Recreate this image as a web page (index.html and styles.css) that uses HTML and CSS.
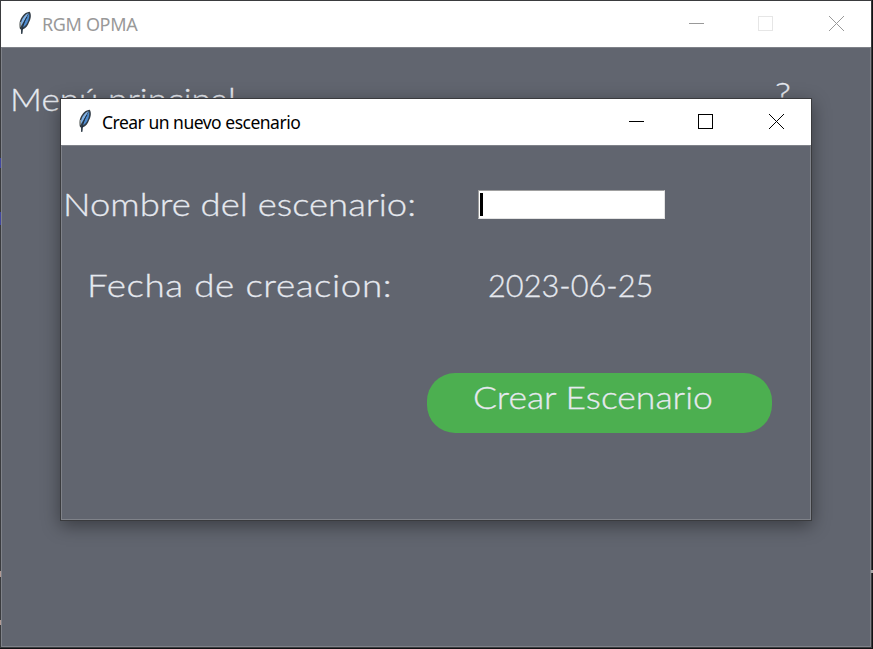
FILE: index.html
```html
<!DOCTYPE html>
<html lang="es">
<head>
<meta charset="utf-8">
<title>RGM OPMA</title>
<link rel="stylesheet" href="styles.css">
</head>
<body>
<svg width="0" height="0" class="defs">
  <symbol id="feather" viewBox="0 0 16 24">
    <path d="M12.800.7C9 .8 5.300 4 3.300 9c-1 2.700-1.200 6-.3 9l1 .6L4.300 23l1-.1.3-4.300c3.500-1.500 5.600-4.400 6.500-7.600C13.800 8 14.700 4 12.800.7Z" fill="#333d46"/>
    <path d="M11.600 2C8 3.500 4.900 7.500 4 12l-.2 3.500L7 10Z" fill="#83b4e8"/>
    <path d="M12 2.200 8.500 9l-3.200 7.800c3-1.500 4.800-3.800 5.800-6.800.8-2.500 1.600-5 .9-7.800Z" fill="#4f8ccf"/>
    <path d="M10 6C8 9 5.600 14 4.700 22.500" fill="none" stroke="#142638" stroke-width=".8"/>
    <path d="m3.300 11-.4 5" stroke="#b9b9ae" stroke-width="1"/>
  </symbol>
</svg>
<div class="window main">
  <div class="titlebar">
    <svg class="feather"><use href="#feather"/></svg>
    <span class="title">RGM OPMA</span>
    <svg class="controls" width="160" height="16" shape-rendering="crispEdges">
      <path class="min" d="M0 7.500h15"/><rect class="max" x="69.500" y=".5" width="14" height="14"/><path class="close" shape-rendering="auto" d="m140 0 15 15m0-15-15 15"/>
    </svg>
  </div>
  <div class="content">
    <div class="heading"><span class="label menu">Menú principal</span><span class="label help">?</span></div>
  </div>
  <i class="edge e1"></i><i class="edge e2"></i><i class="edge e3"></i><i class="edge e4"></i><i class="edge e5"></i>
</div>
<div class="window dialog">
  <div class="titlebar">
    <svg class="feather"><use href="#feather"/></svg>
    <span class="title">Crear un nuevo escenario</span>
    <svg class="controls" width="160" height="16" shape-rendering="crispEdges">
      <path class="min" d="M0 7.500h15"/><rect class="max" x="69.500" y=".5" width="14" height="14"/><path class="close" shape-rendering="auto" d="m140 0 15 15m0-15-15 15"/>
    </svg>
  </div>
  <div class="content form">
    <div class="row name"><div class="cell"><span class="label">Nombre del escenario:</span></div><div class="entry"><i class="caret"></i></div></div>
    <div class="row date"><div class="cell"><span class="label">Fecha de creacion:</span></div><span class="label value">2023-06-25</span></div>
    <div class="button"><span class="label">Crear Escenario</span></div>
  </div>
</div>
</body>
</html>
```
FILE: styles.css
```css
* { box-sizing: border-box; }
body { margin: 0; width: 873px; height: 649px; overflow: hidden; background: #111214; position: relative; }
.defs { position: absolute; }
.window { border: 1px solid #3a3b3e; display: flex; flex-direction: column; }
.main { width: 872px; height: 648px; position: relative; }
.dialog { position: absolute; left: 60px; top: 98px; width: 752px; height: 423px; box-shadow: 0 5px 17px rgba(0,0,0,.4); }
.titlebar { height: 46px; flex: none; background: #fff; display: flex; align-items: flex-start; padding: 0 22px 0 16px; }
.feather { width: 16px; height: 24px; margin-top: 10px; }
.title { font: 18px/24px "Noto Sans", sans-serif; margin: 11px 0 0 9px; color: #000; white-space: nowrap; letter-spacing: -.35px; }
.main .title { color: #999; }
.dialog .title { font-size: 17.500px; letter-spacing: -.5px; }
.controls { margin: 15px 0 0 auto; flex: none; fill: none; stroke: #000; stroke-width: 1; }
.main .controls { stroke: #999; }
.main .max { stroke: #e6e6e6; }
.content { flex: 1; background: #61656f; border: 1px solid #7f8289; }
.label { display: inline-block; font: 300 32px/40px Lato, sans-serif; color: #e6e9ef; -webkit-text-stroke: .3px #e6e9ef; white-space: nowrap; transform-origin: 0 50%; }
.heading { display: flex; padding: 31px 0 0 8px; }
.menu { width: 765px; transform: scaleX(1.1); }
.help { margin-top: -6px; transform: scaleX(1.15); }
.form { display: flex; flex-direction: column; }
.row { display: flex; }
.name { padding: 38px 0 0 1px; height: 119px; }
.name .cell { width: 415px; }
.name .label { transform: scaleX(1.14); }
.entry { width: 187px; height: 29px; margin-top: 6px; background: #fff; border: 1px solid #a0a0a0; border-right-color: #e3e3e3; border-bottom-color: #e3e3e3; padding: 2px 0 0 1px; }
.caret { display: block; width: 3px; height: 23px; background: #000; }
.date { padding-left: 25px; height: 108px; }
.date .cell { width: 401px; }
.date .cell .label { letter-spacing: .5px; transform: scaleX(1.15); }
.date .value { transform: scaleX(.96); }
.button { width: 345px; height: 60px; margin-left: 365px; border-radius: 28px; background: #4caf50; padding: 4px 0 0 46px; }
.button .label { transform: scaleX(1.11); }
.edge { position: absolute; left: -1px; width: 1px; height: 3px; background: #a6a6a6; }
.e1 { top: 157px; height: 10px; background: #4147a0; }
.e2 { top: 211px; height: 13px; background: #4147a0; }
.e3 { top: 570px; height: 6px; background: #b19a94; }
.e4 { top: 619px; height: 5px; background: #b19a94; }
.e5 { left: 870px; top: 569px; width: 2px; height: 3px; }
```
